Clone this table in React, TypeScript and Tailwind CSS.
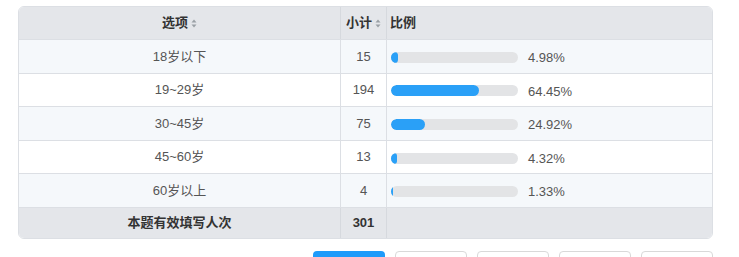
const rows = [
  { label: "18岁以下", count: 15, pct: 4.98 },
  { label: "19~29岁", count: 194, pct: 64.45 },
  { label: "30~45岁", count: 75, pct: 24.92 },
  { label: "45~60岁", count: 13, pct: 4.32 },
  { label: "60岁以上", count: 4, pct: 1.33 },
];

function SortIcon() {
  return (
    <svg width="6" height="9" viewBox="0 0 6 9" className="ml-[3px] inline-block">
      <path d="M3 0.5 L5.5 3.5 L0.5 3.5 Z" fill="#9aa0a6" />
      <path d="M3 8.5 L5.5 5.5 L0.5 5.5 Z" fill="#9aa0a6" />
    </svg>
  );
}

export default function App() {
  return (
    <div
      className="w-[739px] h-[257px] bg-white overflow-hidden text-[13px] text-[#555]"
      style={{ fontFamily: '"Liberation Sans", Arial, "Noto Sans CJK SC", sans-serif' }}
    >
      <div className="pt-[6px] pl-[18px]">
        <div className="w-[695px] rounded-[6px] border border-[#dcdfe4] overflow-hidden">
          {/* header */}
          <div className="flex h-[32px] bg-[#e4e6ea] font-bold text-[#333]">
            <div className="w-[322px] flex items-center justify-center border-r border-[#d6d9de]">
              选项<SortIcon />
            </div>
            <div className="w-[46px] flex items-center justify-center border-r border-[#d6d9de]">
              小计<SortIcon />
            </div>
            <div className="flex-1 flex items-center pl-[3px]">比例</div>
          </div>

          {rows.map((r, i) => (
            <div
              key={r.label}
              className={
                "flex h-[33.6px] border-t border-[#dcdfe4] " +
                (i % 2 === 0 ? "bg-[#f5f8fb]" : "bg-white")
              }
            >
              <div className="w-[322px] flex items-center justify-center border-r border-[#dcdfe4]">
                {r.label}
              </div>
              <div className="w-[46px] flex items-center justify-center border-r border-[#dcdfe4]">
                {r.count}
              </div>
              <div className="flex-1 flex items-center pl-[4px] pt-[2px]">
                <div className="w-[127px] h-[11px] rounded-full bg-[#e3e4e6] overflow-hidden">
                  <div
                    className="h-full min-w-[2px] rounded-full bg-[#2aa0f7]"
                    style={{ width: `${r.pct * 1.075}%` }}
                  />
                </div>
                <span className="ml-[10px] mt-[1px]">{r.pct.toFixed(2)}%</span>
              </div>
            </div>
          ))}

          {/* footer */}
          <div className="flex h-[31px] border-t border-[#dcdfe4] bg-[#e4e6ea] font-bold text-[#333]">
            <div className="w-[322px] flex items-center justify-center border-r border-[#d6d9de]">
              本题有效填写人次
            </div>
            <div className="w-[46px] flex items-center justify-center border-r border-[#d6d9de]">
              301
            </div>
            <div className="flex-1" />
          </div>
        </div>

        <div className="flex justify-end gap-[10px] mt-[12px] w-[695px]">
          <div className="w-[72px] h-[24px] rounded-[4px] bg-[#1e9bfa]" />
          <div className="w-[72px] h-[24px] rounded-[4px] border border-[#d9d9d9] bg-white" />
          <div className="w-[72px] h-[24px] rounded-[4px] border border-[#d9d9d9] bg-white" />
          <div className="w-[72px] h-[24px] rounded-[4px] border border-[#d9d9d9] bg-white" />
          <div className="w-[72px] h-[24px] rounded-[4px] border border-[#d9d9d9] bg-white" />
        </div>
      </div>
    </div>
  );
}
